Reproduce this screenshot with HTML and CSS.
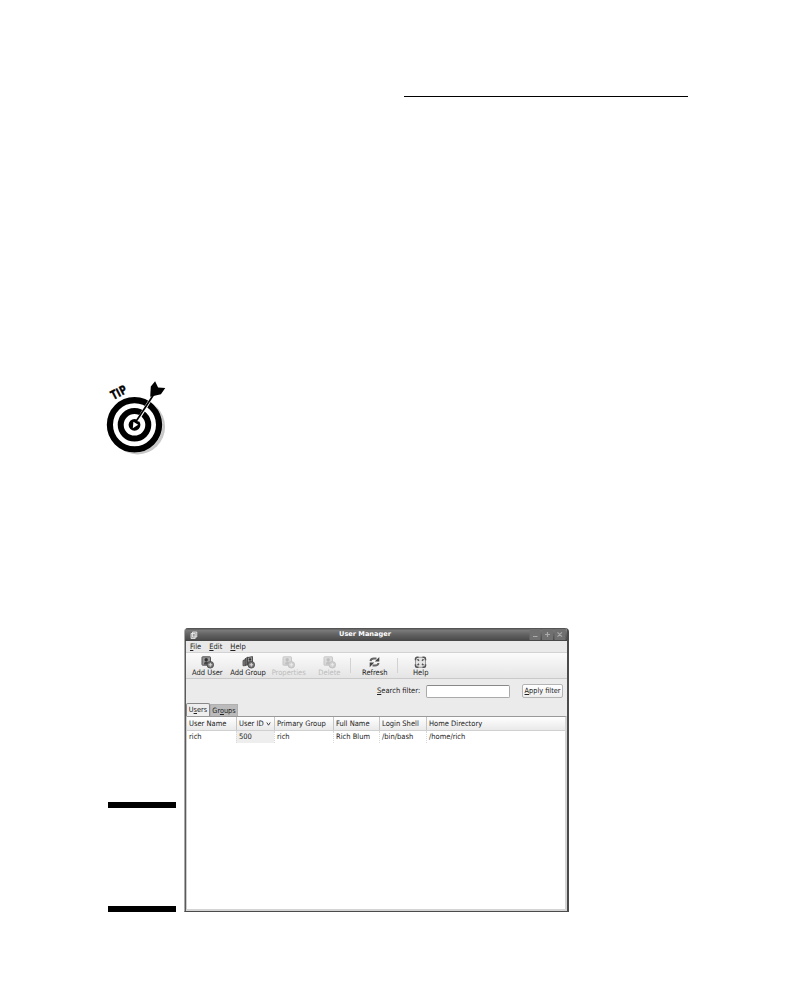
FILE: index.html
```html
<!DOCTYPE html>
<html lang="en">
<head>
<meta charset="utf-8">
<title>User Manager</title>
<link rel="stylesheet" href="styles.css">
</head>
<body>
<svg class="defs" width="0" height="0" aria-hidden="true">
  <symbol id="badge" viewBox="0 0 13 13">
    <circle cx="9.3" cy="8.800" r="3.300" fill="#777" stroke="#444" stroke-width=".8"/>
    <path d="M9.300 7v3.600M7.500 8.800h3.600" stroke="#ddd" stroke-width="1"/>
  </symbol>
  <symbol id="user" viewBox="0 0 13 13">
    <rect x="1" y=".8" width="8.500" height="8.400" rx=".6" fill="#999" stroke="#555"/>
    <path d="M3 8.500Q3 5.400 5.300 5.400T7.500 8.500Z" fill="#444"/>
    <circle cx="5.200" cy="3.800" r="1.700" fill="#333"/>
    <use href="#badge"/>
  </symbol>
  <symbol id="group" viewBox="0 0 13 13">
    <path d="M1 4.500l3-1v6l-3 .3zM3 2.800L6 1v8H3z" fill="#888" stroke="#444" stroke-width=".8"/>
    <path d="M5.500 1.600L10.500.6v8h-5z" fill="#999" stroke="#444" stroke-width=".9"/>
    <circle cx="8" cy="3.400" r="1.200" fill="#333"/>
    <path d="M6.300 7.800V5.500h3.400v2.300" fill="#444"/>
    <use href="#badge"/>
  </symbol>
</svg>
<main class="page">
  <div class="rule"></div>
  <svg class="tip" viewBox="0 0 75 85" role="img" aria-label="Tip">
    <circle cx="37.500" cy="51.800" r="27.600" fill="#c8c8c8"/>
    <circle cx="34.500" cy="49.800" r="28" fill="#fff"/>
    <circle cx="34.500" cy="49.800" r="24.600" fill="none" stroke="#000" stroke-width="6.200"/>
    <circle cx="34.500" cy="49.800" r="13.800" fill="none" stroke="#000" stroke-width="6"/>
    <circle cx="34.500" cy="49.800" r="5.900" fill="#000"/>
    <path d="M33.400 46.800l4.800 3-5.400 3.500z" fill="#fff"/>
    <path d="M37.200 46L53 20.500" stroke="#fff" stroke-width="3"/>
    <path d="M35.800 46.800L58 13" stroke="#000" stroke-width="1.700"/>
    <path d="M50.200 21.800l.6-10.300 4.300-5.200 3 6.200 7.200.6-4.400 6.200z" fill="#000"/>
    <text class="tip-text" transform="translate(13.200 25) rotate(-27)" textLength="16.500" lengthAdjust="spacingAndGlyphs">TIP</text>
  </svg>
  <section class="figure">
    <div class="caption"></div>
    <div class="window">
      <header class="titlebar">
        <svg class="app-icon" viewBox="0 0 8 8"><path d="M2.500 1h4.300v5H2.500zM1 2.500h4.200v5H1z" fill="#999" stroke="#eee" stroke-width=".8"/></svg>
        <span class="title">User Manager</span>
        <svg class="controls" viewBox="0 0 38 13">
          <path d="M.5 1h11v11H.5zM13 1h11v11H13zM25.500 1h11v11H25.500z" fill="#707070"/>
          <path d="M4 8.500h4.500M16 6.500h5M18.500 4v5M28.500 4.300l4.400 4.400M32.900 4.300l-4.400 4.400" stroke="#aaa" stroke-width="1.200"/>
        </svg>
      </header>
      <nav class="menu"><span><u>F</u>ile</span><span><u>E</u>dit</span><span><u>H</u>elp</span></nav>
      <div class="toolbar">
        <div class="tool"><svg viewBox="0 0 13 13"><use href="#user"/></svg><span>Add User</span></div>
        <div class="tool"><svg viewBox="0 0 13 13"><use href="#group"/></svg><span>Add Group</span></div>
        <div class="tool off"><svg viewBox="0 0 13 13"><use href="#user"/></svg><span>Properties</span></div>
        <div class="tool off"><svg viewBox="0 0 13 13"><use href="#user"/></svg><span>Delete</span></div>
        <i class="sep"></i>
        <div class="tool refresh"><svg viewBox="0 0 13 13"><path d="M2.500 5.200Q2.800 2.600 6 2.600H8.500M10.500 7Q10.200 9.600 7 9.600H4.500" fill="none" stroke="#666" stroke-width="2"/><path d="M11.300 1V5.600H6.800zM1.700 11.200V6.600h4.500z" fill="#444"/></svg><span>Refresh</span></div>
        <i class="sep"></i>
        <div class="tool help"><svg viewBox="0 0 13 13"><rect x="1.500" y="1.300" width="10" height="10" rx="2.500" fill="#e4e4e4" stroke="#999" stroke-width="1"/><path d="M1.500 4.300V3q0-1.700 1.700-1.700H4.500M8.500 1.300H10q1.500 0 1.500 1.700v1.300M11.500 8.300v1.500q0 1.500-1.500 1.500H8.500M4.500 11.300H3q-1.500 0-1.500-1.500V8.300" fill="none" stroke="#555" stroke-width="1.500"/><path d="M3.500 3.300l1.500 1.500M9.500 3.300L8 4.800M3.500 9.300L5 7.800M9.500 9.300L8 7.800" stroke="#555" stroke-width="1.500"/></svg><span>Help</span></div>
      </div>
      <div class="search">
        <label for="filter"><u>S</u>earch filter:</label>
        <input id="filter" type="text">
        <button type="button"><u>A</u>pply filter</button>
      </div>
      <div class="tabs"><span class="tab active">U<u>s</u>ers</span><span class="tab">Gr<u>o</u>ups</span></div>
      <div class="list">
        <div class="row head"><span>User Name</span><span>User ID <svg class="sort" viewBox="0 0 5 4"><path d="M.8.5l1.700 2.700L4.200.5" fill="none" stroke="#333" stroke-width=".9"/></svg></span><span>Primary Group</span><span>Full Name</span><span>Login Shell</span><span>Home Directory</span></div>
        <div class="row"><span>rich</span><span class="sorted">500</span><span>rich</span><span>Rich Blum</span><span>/bin/bash</span><span>/home/rich</span></div>
      </div>
    </div>
  </section>
</main>
</body>
</html>
```
FILE: styles.css
```css
* { box-sizing: border-box; }
body { margin: 0; background: #fff; }
.defs { display: block; height: 0; }
.page { width: 797px; height: 999px; padding: 96px 0 0 100px; overflow: hidden; }
.rule { width: 284px; height: 1px; margin-left: 304px; background: #000; }
.tip { display: block; width: 75px; height: 85px; margin-top: 278px; }
.tip-text { font: bold 12.5px "Open Sans", sans-serif; fill: #000; stroke: #000; stroke-width: .4px; }
.figure { display: flex; align-items: flex-end; gap: 8px; margin: 168px 0 0 8px; }
.caption { width: 68px; height: 110px; border: solid #000; border-width: 6px 0; }
.window {
  display: flex; flex-direction: column; width: 385px; height: 284px;
  border: 1px solid #4b4b4b; border-width: 0 2px 1px 1px; border-left-color: #aaa;
  border-radius: 4px 4px 0 0; overflow: hidden; background: #ebebeb;
  box-shadow: inset 1px 0 #5a5a5a;
  font: 7.5px/10px "DejaVu Sans Condensed", "DejaVu Sans", sans-serif; color: #222; white-space: nowrap;
}
u { text-decoration-thickness: 1px; text-underline-offset: 1px; }
.titlebar { display: flex; flex: 0 0 13px; align-items: center; justify-content: space-between; padding-left: 5px; background: linear-gradient(#555 0 1px, #7c7c7c 2px, #606060 7px, #505050 11px, #444); }
.app-icon { width: 8px; height: 8px; }
.title { font: bold 6.600px/13px "DejaVu Sans", sans-serif; color: #fff; margin-left: 3px; }
.controls { width: 38px; height: 13px; }
.menu, .toolbar, .list { margin-left: 1px; }
.menu { display: flex; flex: 0 0 12px; gap: 8px; padding-left: 4px; line-height: 11px; border-bottom: 1px solid #d2d2d2; background: #e9e9e9; }
.toolbar { display: flex; flex: 0 0 26px; padding-left: 1px; background: linear-gradient(#fbfbfb, #e5e5e5); border-bottom: 1px solid #c9c9c9; }
.tool { display: flex; flex-direction: column; align-items: center; width: 40.700px; padding-top: 3px; }
.tool svg { width: 13px; height: 13px; }
.tool span { line-height: 8px; }
.off { color: #bcbcbc; }
.off svg { opacity: .28; }
.sep { width: 1px; height: 15px; margin-top: 5px; background: #d2d2d2; }
.refresh, .help { width: 46px; }
.refresh { padding-left: 2px; }
.search { display: flex; flex: 0 0 24px; align-items: center; padding-left: 192px; }
.search label { width: 49px; }
.search input { width: 84px; height: 13px; padding: 0; border: 1px solid #aaa; border-top-color: #888; border-radius: 2px; background: #fff; }
.search button { width: 41px; height: 14px; margin-left: 12px; padding: 0; border: 1px solid #b4b4b4; border-radius: 2px; background: linear-gradient(#fff, #eee); color: inherit; font: inherit; font-size: 7.300px; line-height: 12px; }
.tabs { display: flex; align-items: flex-end; flex: 0 0 13px; padding-left: 1px; }
.tab { width: 28px; height: 12px; text-align: center; line-height: 11px; background: #bbb; border: 1px solid #b0b0b0; border-bottom: 0; font-size: 7.300px; }
.active { width: 24px; height: 13px; background: #eee; border-color: #888; border-radius: 2px 2px 0 0; }
.list { flex: 1; border: 1px solid #999; border-width: 1px 2px 2px 1px; border-color: #999 #d4d4d4 #d4d4d4 #ccc; background: #fff; }
.row { display: grid; grid-template-columns: 49px 38px 59px 46px 47px 1fr; height: 12px; line-height: 12px; }
.row span { padding-left: 2px; border-left: 1px dotted #d8d8d8; }
.row span:first-child { border-left: 0; }
.head { height: 14px; line-height: 13px; background: linear-gradient(#fff, #e9e9e9); border-bottom: 1px solid #d0d0d0; }
.head span { border-left: 1px solid #c5c5c5; }
.sort { width: 5px; height: 4px; }
.row .sorted { background: #eee; }
```
